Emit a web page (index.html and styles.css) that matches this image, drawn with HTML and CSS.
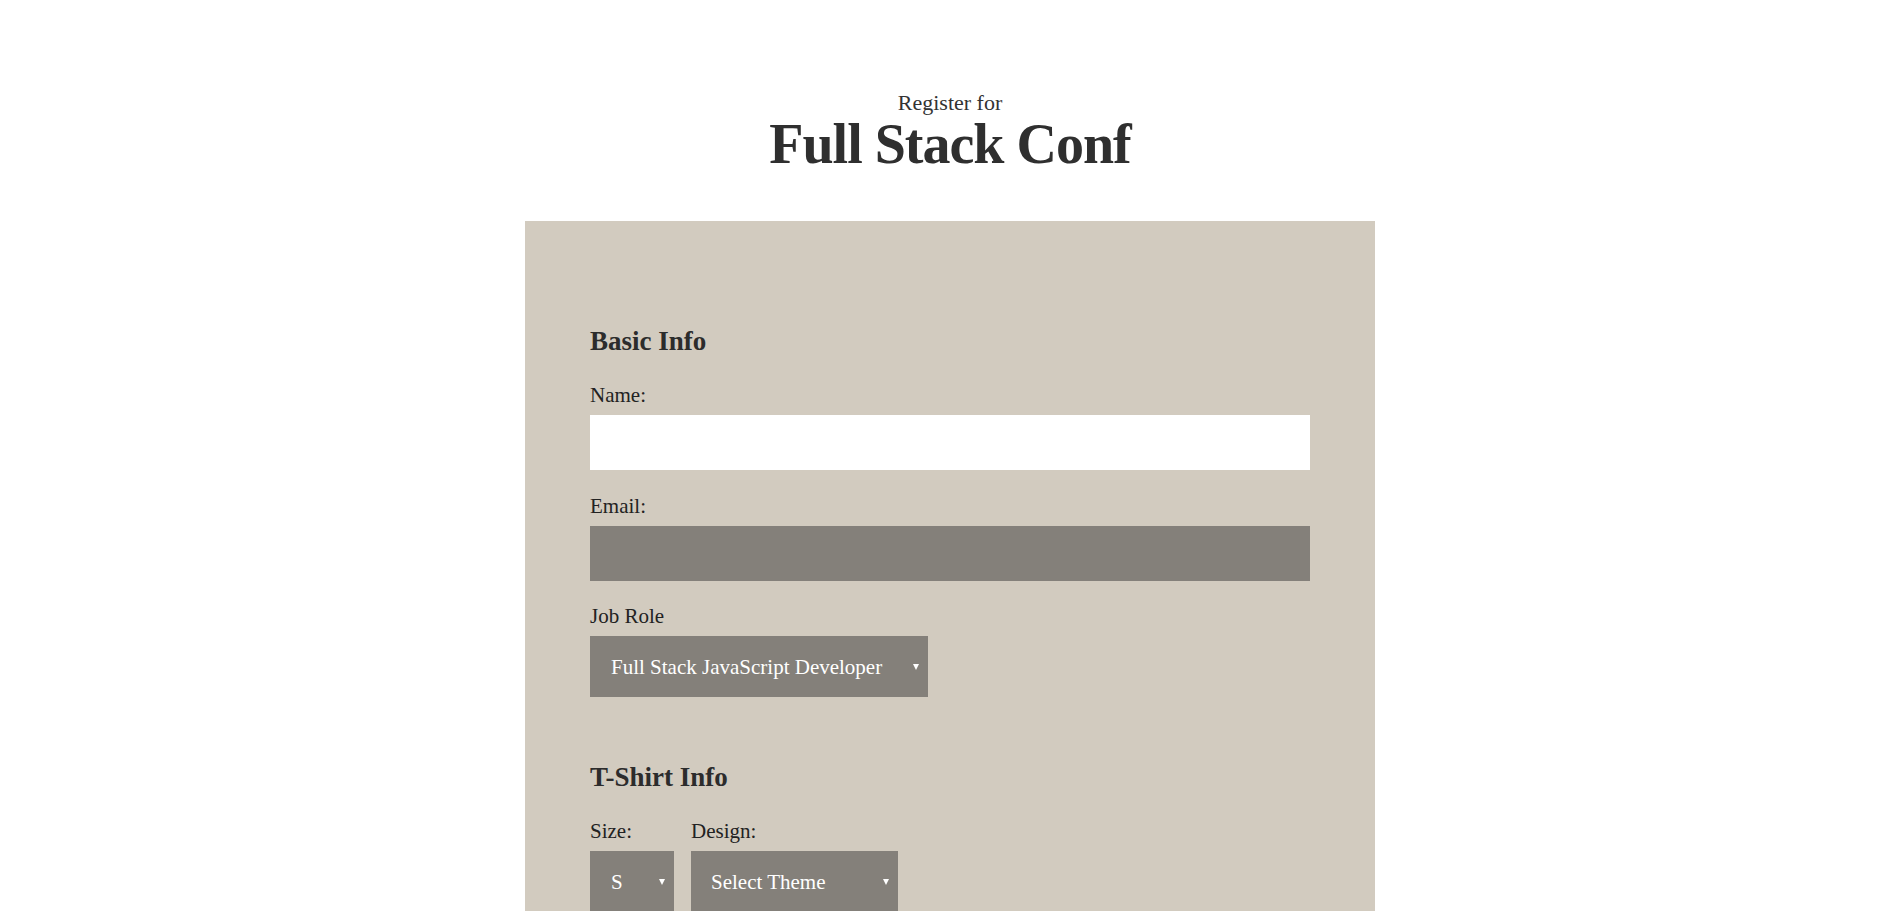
FILE: index.html
```html
<!DOCTYPE html>
<html lang="en">
<head>
<meta charset="utf-8">
<title>Register for Full Stack Conf</title>
<link rel="stylesheet" href="styles.css">
</head>
<body>
<div class="page">
  <header class="header">
    <span class="pre">Register for</span>
    <h1 class="title">Full Stack Conf</h1>
  </header>
  <form class="panel">
    <fieldset class="group">
      <legend class="group-title">Basic Info</legend>
      <label class="label" for="name">Name:</label>
      <input class="field field-light" id="name" type="text">
      <label class="label" for="mail">Email:</label>
      <input class="field field-dark" id="mail" type="email">
      <label class="label" for="title">Job Role</label>
      <div class="select-wrap select-job">
        <select class="select" id="title">
          <option>Full Stack JavaScript Developer</option>
        </select>
      </div>
    </fieldset>
    <fieldset class="group group-shirt">
      <legend class="group-title">T-Shirt Info</legend>
      <div class="shirt-row">
        <div class="shirt-col">
          <label class="label" for="size">Size:</label>
          <div class="select-wrap select-size">
            <select class="select" id="size"><option>S</option></select>
          </div>
        </div>
        <div class="shirt-col">
          <label class="label" for="design">Design:</label>
          <div class="select-wrap select-design">
            <select class="select" id="design"><option>Select Theme</option></select>
          </div>
        </div>
      </div>
    </fieldset>
  </form>
</div>
</body>
</html>
```

FILE: styles.css
```css
* { box-sizing: border-box; }
html, body { margin: 0; padding: 0; background: #fff; }
body {
  font-family: "Liberation Serif", "Times New Roman", serif;
  color: #2e2e2e;
  overflow: hidden;
}
.page {
  padding-left: 10px;
}
.header {
  display: flex;
  flex-direction: column;
  align-items: center;
  padding-top: 92px;
}
.pre {
  font-size: 22px;
  line-height: 22px;
  color: #333;
}
.title {
  margin: 0;
  font-size: 56px;
  line-height: 60px;
  font-weight: 700;
  letter-spacing: -1px;
  color: #2f2f2f;
}
.panel {
  width: 850px;
  margin: 47px auto 0;
  background: #d2cbbf;
  padding: 105px 65px 60px;
  min-height: 800px;
}
.group {
  border: 0;
  margin: 0;
  padding: 0;
  display: flex;
  flex-direction: column;
  align-items: flex-start;
}
.group-title {
  padding: 0;
  font-size: 27px;
  line-height: 30px;
  font-weight: 700;
  color: #2c2c2c;
  margin-bottom: 27px;
}
.group-shirt { margin-top: 65px; }
.label {
  display: block;
  font-size: 21px;
  line-height: 24px;
  color: #222;
  margin-bottom: 8px;
}
.field {
  display: block;
  width: 720px;
  height: 55px;
  border: 0;
  margin: 0 0 23px;
  padding: 0 20px;
  font-family: inherit;
  font-size: 21px;
}
.field-light { background: #fff; margin-bottom: 24px; }
.field-dark { background: #84807a; }
.select-wrap {
  position: relative;
  height: 61px;
  background: #84807a;
}
.select-wrap::after {
  content: "";
  position: absolute;
  top: 50%;
  right: 9px;
  margin-top: -3px;
  border-left: 3px solid transparent;
  border-right: 3px solid transparent;
  border-top: 6px solid #fff;
}
.select {
  appearance: none;
  -webkit-appearance: none;
  display: block;
  width: 100%;
  height: 100%;
  border: 0;
  margin: 0;
  background: transparent;
  color: #fff;
  font-family: inherit;
  font-size: 21px;
  padding: 0 20px 0 21px;
}
.select-job { width: 338px; }
.select-size { width: 84px; }
.select-design { width: 207px; }
.select-design .select { padding-left: 20px; }
.shirt-row {
  display: flex;
  gap: 17px;
}
.shirt-col {
  display: flex;
  flex-direction: column;
}
```
